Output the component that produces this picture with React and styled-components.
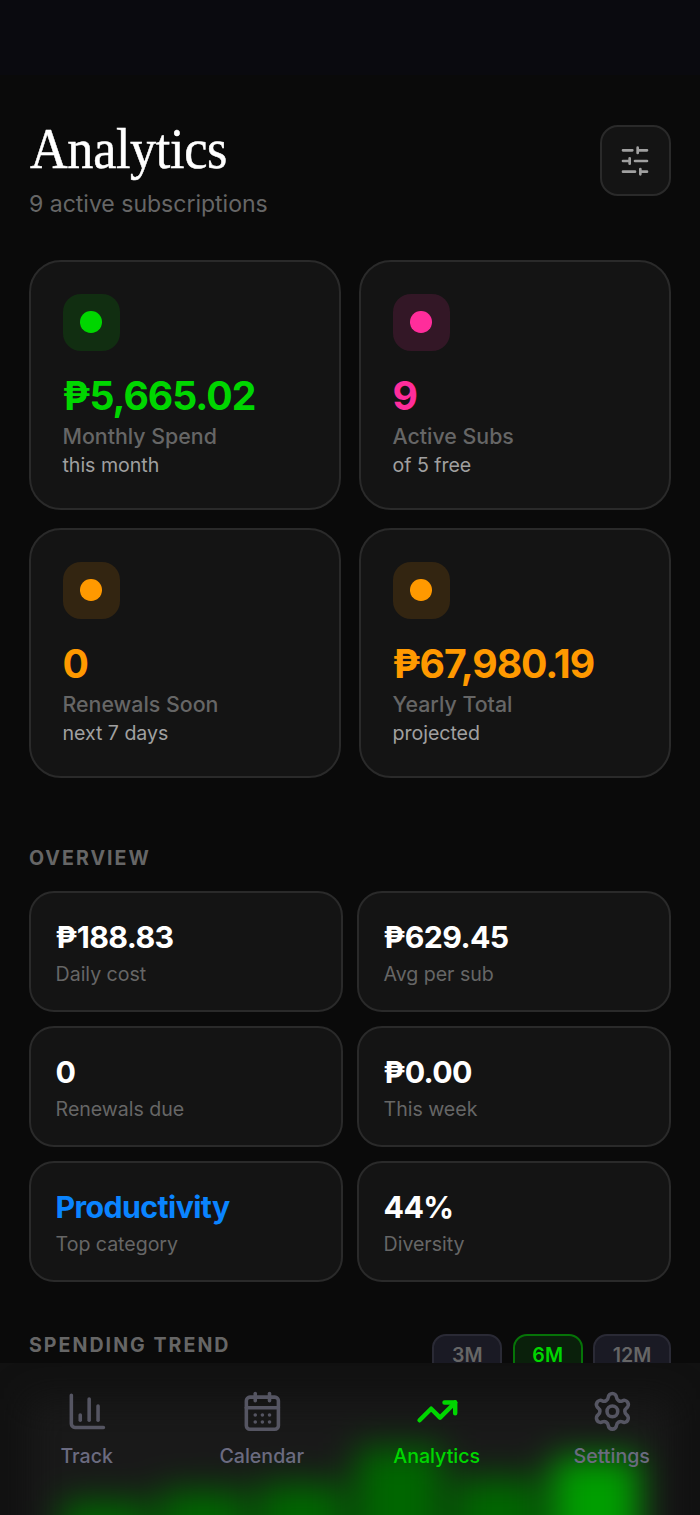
import React from "react";
import styled, { createGlobalStyle, css } from "styled-components";
import { ChartColumn, CalendarDays, TrendingUp, Settings } from "lucide-react";

const GlobalStyle = createGlobalStyle`
  * {
    box-sizing: border-box;
  }
  body {
    margin: 0;
    background: #0a0a0a;
    font-family: "Inter", "Liberation Sans", sans-serif;
    overflow: hidden;
  }
`;

const Screen = styled.div`
  display: flex;
  flex-direction: column;
  width: 700px;
  height: 1515px;
  overflow: hidden;
  background: #0a0a0a;
`;
const StatusBar = styled.div`
  flex: none;
  height: 75px;
  background: #0a0a0f;
`;
const Content = styled.main`
  flex: 1;
  min-height: 0;
  overflow: hidden;
  padding: 50px 29px 0;
`;

// header
const Header = styled.header`
  display: flex;
  justify-content: space-between;
  align-items: flex-start;
  height: 135px;
`;
const Title = styled.h1`
  margin: -1px 0 0 1px;
  color: #fff;
  font-family: "Liberation Serif", serif;
  font-size: 56.5px;
  font-weight: 400;
  line-height: 50px;
  letter-spacing: -0.4px;
  -webkit-text-stroke: 0.5px #fff;
  transform: scaleX(0.925);
  transform-origin: left;
`;
const Subtitle = styled.p`
  margin: 15.6px 0 0;
  color: #666;
  font-size: 23.1px;
  line-height: 28px;
  letter-spacing: -0.04px;
`;
const FilterButton = styled.button`
  display: flex;
  align-items: center;
  justify-content: center;
  width: 71px;
  height: 71px;
  padding: 0 1px 0 0;
  color: #a0a0a0;
  background: #141414;
  border: 2px solid #2a2a2a;
  border-radius: 18px;
`;

// stat cards
const StatGrid = styled.section`
  display: grid;
  grid-template-columns: 1fr 1fr;
  gap: 18px;
`;
const StatCard = styled.div`
  height: 250px;
  padding: 31.6px 31.5px;
  background: #141414;
  border: 2px solid #2a2a2a;
  border-radius: 32px;
`;
const StatIcon = styled.div`
  display: flex;
  align-items: center;
  justify-content: center;
  width: 57px;
  height: 57px;
  margin-bottom: 21.9px;
  border-radius: 18px;
  background: ${props => props.$color}22;
  &::after {
    content: "";
    width: 21.5px;
    height: 21.5px;
    border-radius: 50%;
    background: ${props => props.$color};
  }
`;
const StatValue = styled.div`
  color: ${props => props.$color};
  font-size: 39.2px;
  font-weight: 700;
  line-height: 48px;
  letter-spacing: -1.05px;
`;
const StatLabel = styled.div`
  margin-top: 2.6px;
  color: #666;
  font-size: 21.35px;
  font-weight: 500;
  line-height: 26px;
`;
const StatSub = styled.div`
  margin-top: 3.8px;
  color: #a0a0a0;
  font-size: 19.6px;
  line-height: 24px;
  letter-spacing: -0.04px;
`;

// overview
const SectionTitle = styled.h2`
  margin: 0;
  color: #666;
  font-size: 19.6px;
  font-weight: 700;
  line-height: 24px;
  letter-spacing: 2.02px;
`;
const Overview = styled.section`
  margin-top: 68px;
`;
const OverviewGrid = styled.div`
  display: grid;
  grid-template-columns: 1fr 1fr;
  gap: 14.2px 14px;
  margin-top: 21px;
`;
const OverviewCard = styled.div`
  height: 121px;
  padding: 25.6px 24.6px;
  background: #141414;
  border: 2px solid #2a2a2a;
  border-radius: 25px;
`;
const OverviewValue = styled.div`
  color: ${props => props.$color || "#fff"};
  font-size: 30.3px;
  font-weight: 700;
  line-height: 37px;
  letter-spacing: -0.6px;
`;
const OverviewLabel = styled.div`
  margin-top: 6.4px;
  color: #666;
  font-size: 19.6px;
  line-height: 24px;
  letter-spacing: -0.04px;
`;

// spending trend
const Trend = styled.section`
  margin-top: 50.6px;
`;
const TrendHeader = styled.div`
  display: flex;
  justify-content: space-between;
  align-items: flex-start;
`;
const RangeTabs = styled.div`
  display: flex;
  gap: 10.7px;
  margin-top: 1px;
`;
const RangeTab = styled.button`
  height: 43px;
  padding: 0 17.6px;
  color: #666;
  background: #1a1a24;
  border: 2px solid #2a2a35;
  border-radius: 14px;
  font-family: inherit;
  font-size: 19.6px;
  font-weight: 600;
  ${props => props.$active && css`
    color: #00d600;
    background: #0a200b;
    border-color: #067408;
  `}
`;

// bottom navigation, with the chart glowing through it
const TabBar = styled.nav`
  position: relative;
  flex: none;
  display: grid;
  grid-template-columns: repeat(4, 1fr);
  height: 152px;
  padding-top: 27px;
  overflow: hidden;
  background: #111111;
`;
const Glow = styled.div`
  position: absolute;
  top: 36px;
  left: 29px;
  right: 29px;
  height: 240px;
  display: flex;
  align-items: flex-end;
  justify-content: center;
  gap: 11px;
  background: #191919;
  filter: blur(17px);
`;
const Bar = styled.div`
  width: 87px;
  height: ${props => props.$height}px;
  background: ${props => (props.$current ? "#009e00" : "#006600")};
`;
const Tab = styled.a`
  position: relative;
  display: flex;
  flex-direction: column;
  align-items: center;
  height: 80px;
  margin-right: 1.6px;
  color: ${props => (props.$active ? "#00d600" : "#6b6b80")};
  font-size: 19.6px;
  font-weight: 500;
  line-height: 24px;
  svg {
    margin: 0 0 11px 1.6px;
    color: ${props => (props.$active ? "#00d600" : "#555562")};
  }
`;

const stats = [
  { value: "₱5,665.02", label: "Monthly Spend", sub: "this month", color: "#00d600" },
  { value: "9", label: "Active Subs", sub: "of 5 free", color: "#ff2d9b" },
  { value: "0", label: "Renewals Soon", sub: "next 7 days", color: "#ff9900" },
  { value: "₱67,980.19", label: "Yearly Total", sub: "projected", color: "#ff9900" },
];

const overview = [
  { value: "₱188.83", label: "Daily cost" },
  { value: "₱629.45", label: "Avg per sub" },
  { value: "0", label: "Renewals due" },
  { value: "₱0.00", label: "This week" },
  { value: "Productivity", label: "Top category", color: "#0a84ff" },
  { value: "44%", label: "Diversity" },
];

const months = [138, 149, 156, 192, 162, 182];

const tabs = [
  { label: "Track", Icon: ChartColumn },
  { label: "Calendar", Icon: CalendarDays },
  { label: "Analytics", Icon: TrendingUp, active: true },
  { label: "Settings", Icon: Settings },
];

function SlidersIcon() {
  return (
    <svg width="32" height="32" viewBox="0 0 24 24" fill="none" stroke="currentColor" strokeWidth="2" strokeLinecap="round">
      <path d="M21 4h-7M10 4H3M21 12h-9M8 12H3M21 20h-5M12 20H3M14 2v4M8 10v4M16 18v4" />
    </svg>
  );
}

function App() {
  return (
    <>
      <GlobalStyle />
      <Screen>
        <StatusBar />
        <Content>
          <Header>
            <div>
              <Title>Analytics</Title>
              <Subtitle>9 active subscriptions</Subtitle>
            </div>
            <FilterButton aria-label="Filters">
              <SlidersIcon />
            </FilterButton>
          </Header>

          <StatGrid>
            {stats.map(stat => (
              <StatCard key={stat.label}>
                <StatIcon $color={stat.color} />
                <StatValue $color={stat.color}>{stat.value}</StatValue>
                <StatLabel>{stat.label}</StatLabel>
                <StatSub>{stat.sub}</StatSub>
              </StatCard>
            ))}
          </StatGrid>

          <Overview>
            <SectionTitle>OVERVIEW</SectionTitle>
            <OverviewGrid>
              {overview.map(item => (
                <OverviewCard key={item.label}>
                  <OverviewValue $color={item.color}>{item.value}</OverviewValue>
                  <OverviewLabel>{item.label}</OverviewLabel>
                </OverviewCard>
              ))}
            </OverviewGrid>
          </Overview>

          <Trend>
            <TrendHeader>
              <SectionTitle>SPENDING TREND</SectionTitle>
              <RangeTabs>
                <RangeTab>3M</RangeTab>
                <RangeTab $active>6M</RangeTab>
                <RangeTab>12M</RangeTab>
              </RangeTabs>
            </TrendHeader>
          </Trend>
        </Content>

        <TabBar>
          <Glow>
            {months.map((height, i) => (
              <Bar key={i} $height={height} $current={i === months.length - 1} />
            ))}
          </Glow>
          {tabs.map(({ label, Icon, active }) => (
            <Tab key={label} $active={active}>
              <Icon size={42.75} strokeWidth={active ? 2.5 : 2} />
              {label}
            </Tab>
          ))}
        </TabBar>
      </Screen>
    </>
  );
}

export default App;
